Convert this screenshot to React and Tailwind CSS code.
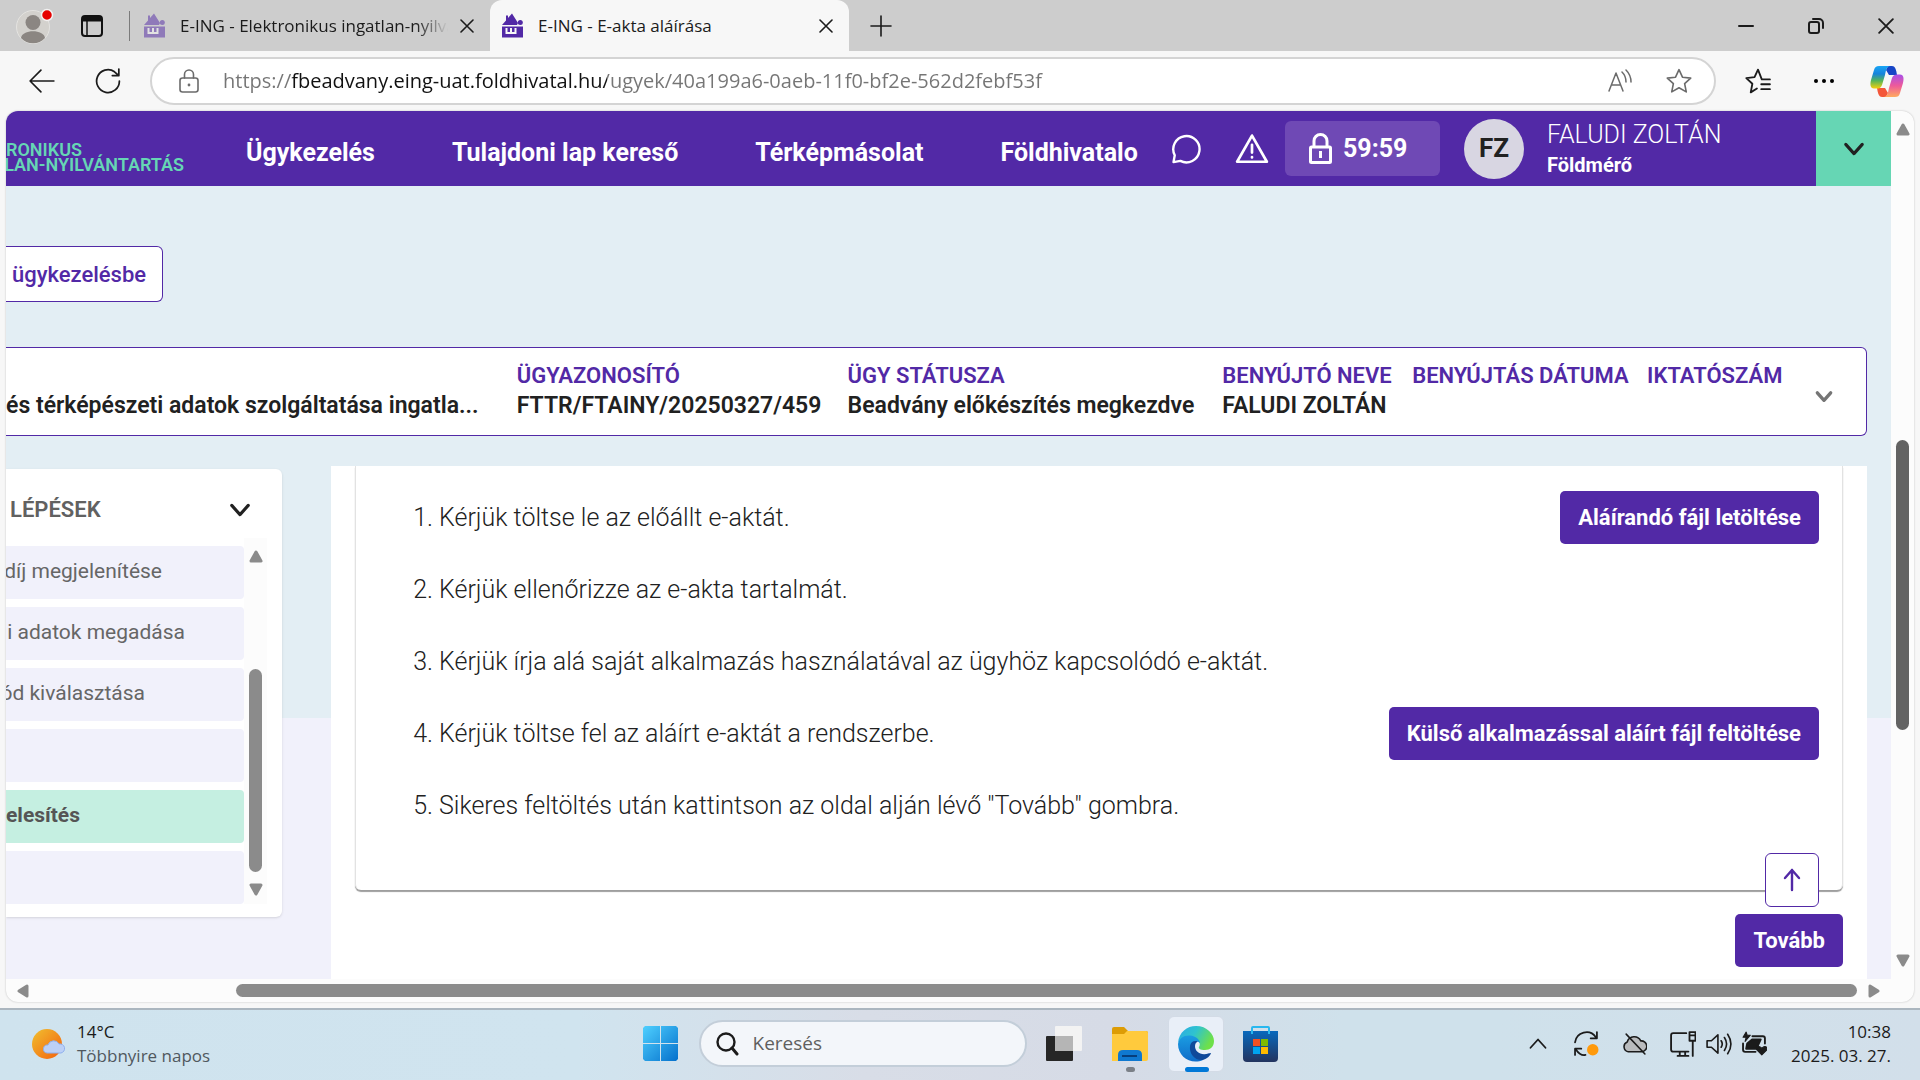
import React from 'react';

function HouseIcon({ className = '' }) {
  return (
    <svg viewBox="0 0 21 25" className={`h-[25px] w-[21px] shrink-0 ${className}`} fill="#5229a6" aria-hidden="true">
      <path d="M0 12 L4 7.500 V2.500 H6 V5 L10 0.500 L16 10 L15 12 Z" />
      <circle cx="18.300" cy="9.500" r="2.500" />
      <path d="M0 13.500 H21 V24.500 H0 Z" />
      <path d="M4.500 15 V20 H13.500 V15 M9 15 V20" fill="none" stroke="#f7f7f7" strokeWidth="2" />
    </svg>
  );
}

function Stroke({ children, size = 24, width = 2, className = '', box = 24 }) {
  return (
    <svg viewBox={`0 0 ${box} ${box}`} width={size} height={size} className={`shrink-0 ${className}`} fill="none" stroke="currentColor" strokeWidth={width} strokeLinecap="round" strokeLinejoin="round" aria-hidden="true">
      {children}
    </svg>
  );
}

function Arrow({ dir }) {
  const paths = {
    up: 'M7 2 L12 11 H2 Z',
    down: 'M2 3 H12 L7 12 Z',
    left: 'M3 7 L11 2 V12 Z',
    right: 'M11 7 L3 2 V12 Z',
  };
  return (
    <svg viewBox="0 0 14 14" width="14" height="14" fill="#8b8b8b" stroke="#8b8b8b" strokeWidth="3" strokeLinejoin="round" aria-hidden="true">
      <path d={paths[dir]} />
    </svg>
  );
}

function CloseX({ size = 14 }) {
  return (
    <Stroke size={size} box={14} width={1.6}>
      <path d="M1 1 L13 13 M13 1 L1 13" />
    </Stroke>
  );
}

function TabBar() {
  return (
    <div className="flex h-[51px] items-stretch bg-[#cdcdcd] text-[17px] text-[#1b1b1b]">
      <div className="flex w-[130px] shrink-0 items-center justify-between pl-4">
        <button aria-label="Profil">
          <svg width="38" height="38" viewBox="0 0 38 38" aria-hidden="true">
            <circle cx="17" cy="20" r="16.500" fill="#d3d1cd" stroke="#e4e3e0" />
            <circle cx="17" cy="15.500" r="7.500" fill="#8b8682" />
            <path d="M5 31 C6 22 28 22 29 31 C23 38 11 38 5 31Z" fill="#8b8682" />
            <circle cx="31" cy="8" r="5.500" fill="#e60000" stroke="#f1f1f1" strokeWidth="1.500" />
          </svg>
        </button>
        <button aria-label="Munkaterületek">
          <svg width="22" height="22" viewBox="0 0 22 22" fill="none" stroke="#111" strokeWidth="2" aria-hidden="true">
            <rect x="1" y="1" width="20" height="20" rx="3" />
            <path d="M1 4 H21" strokeWidth="5" />
            <path d="M6 5 V21" strokeWidth="1.500" />
          </svg>
        </button>
        <span className="h-[30px] w-px bg-[#7b7b7b]" />
      </div>
      <div className="flex w-[360px] shrink-0 items-center pl-[14px] pr-4">
        <HouseIcon className="opacity-50" />
        <span className="ml-[15px] min-w-0 flex-1 overflow-hidden whitespace-nowrap [mask-image:linear-gradient(to_right,black_88%,transparent)]">E-ING - Elektronikus ingatlan-nyilvántartás</span>
        <button aria-label="Lap bezárása" className="ml-3"><CloseX /></button>
      </div>
      <div className="flex w-[359px] shrink-0 items-center rounded-t-xl bg-[#f7f7f7] pl-3 pr-4">
        <HouseIcon />
        <span className="ml-[15px] flex-1 whitespace-nowrap">E-ING - E-akta aláírása</span>
        <button aria-label="Lap bezárása"><CloseX /></button>
      </div>
      <button aria-label="Új lap" className="ml-5"><Stroke size={24} width={1.6}><path d="M2 12 H22 M12 2 V22" /></Stroke></button>
      <div className="ml-auto flex items-center gap-[54px] pr-[26px]">
        <button aria-label="Kis méret"><Stroke size={16} box={16} width={2}><path d="M1 8 H15" /></Stroke></button>
        <button aria-label="Előző méret">
          <Stroke size={16} box={16} width={2}><rect x="1" y="4" width="10" height="11" rx="2" /><path d="M5 1 H11 A4 4 0 0 1 15 5 V10" /></Stroke>
        </button>
        <button aria-label="Bezárás"><CloseX size={16} /></button>
      </div>
    </div>
  );
}

function CopilotIcon() {
  return (
    <svg width="34" height="31" viewBox="0 0 34 31" aria-hidden="true">
      <defs>
        <linearGradient id="cpA" x1="0" y1="0" x2="0" y2="1"><stop offset="0" stopColor="#19a6f5" /><stop offset=".35" stopColor="#1683dc" /><stop offset=".65" stopColor="#54b45a" /><stop offset="1" stopColor="#f4d00c" /></linearGradient>
        <linearGradient id="cpB" x1="0" y1="0" x2="0" y2="1"><stop offset="0" stopColor="#a94fe8" /><stop offset=".5" stopColor="#ee5a9a" /><stop offset="1" stopColor="#ffab5e" /></linearGradient>
      </defs>
      <path d="M18 0 H22 C25 0 26 3 27 9 H19 L16 4Z" fill="#1745c6" />
      <path d="M16 31 H12 C9 31 8 28 7 22 H15 L18 27Z" fill="#f4573a" />
      <path d="M9 0 H20 C16 1 16 5 15 9 L12 19 C11 22 9 22.500 7 22.500 H4 C0 22.500 0 18 1 14 L4 4 C5 1 6 0 9 0Z" fill="url(#cpA)" />
      <path d="M25 31 H14 C18 30 18 26 19 22 L22 12 C23 9 25 8.500 27 8.500 H30 C34 8.500 34 13 33 17 L30 27 C29 30 28 31 25 31Z" fill="url(#cpB)" />
    </svg>
  );
}

const URL_TEXT = 'https://fbeadvany.eing-uat.foldhivatal.hu/ugyek/40a199a6-0aeb-11f0-bf2e-562d2febf53f';

function AddressBar() {
  return (
    <div className="flex h-[60px] items-center bg-[#f7f7f7] pl-[29px] pr-4 text-[#1b1b1b]">
      <button aria-label="Vissza"><Stroke size={26} width={1.5}><path d="M23 12 H1 M11 2 L1 12 L11 22" /></Stroke></button>
      <button aria-label="Frissítés" className="ml-10">
        <Stroke size={26} width={1.6}><path d="M22.500 12 A10.500 10.500 0 1 1 18 3.500 L22 7 M22 1 V7 H16" /></Stroke>
      </button>
      <div className="ml-[29px] flex h-12 min-w-0 flex-1 items-center rounded-full border-2 border-[#d4d4d4] bg-white pl-[25px] pr-[22px] text-[#6b6b6b]">
        <Stroke size={24} width={1.6}><rect x="3" y="9" width="18" height="14" rx="2.500" /><path d="M7.500 9 V5.500 A4.500 4.500 0 0 1 16.500 5.500 V9" /><circle cx="12" cy="16" r="0.600" fill="currentColor" /></Stroke>
        <input aria-label="Címsor" defaultValue={URL_TEXT} className="ml-[22px] min-w-0 flex-1 bg-[linear-gradient(90deg,#757575_69px,#111_69px,#111_384px,#757575_384px)] bg-clip-text text-xl text-transparent outline-none" />
        <button aria-label="Felolvasás">
          <Stroke size={24} width={1.5}><path d="M1 22 L8 4 L15 22 M3.500 16 H12.500 M14 3 Q18 7 18 13 M18 1 Q23 6 23 13" /></Stroke>
        </button>
        <button aria-label="Kedvenc hozzáadása" className="ml-[34px]">
          <Stroke size={26} width={1.5}><path d="M12 1.500 L15.200 8.500 L22.800 9.300 L17.200 14.500 L18.700 22 L12 18.200 L5.300 22 L6.800 14.500 L1.200 9.300 L8.800 8.500 Z" /></Stroke>
        </button>
      </div>
      <button aria-label="Kedvencek" className="ml-[29px]">
        <Stroke size={26} width={1.7}><path d="M23 10.500 H15.500 L12 1.500 L8.800 8.500 L1.200 9.300 L6.800 14.500 L5.300 22.500 L11 19 M15 15 H23 M15 19.500 H23" /></Stroke>
      </button>
      <button aria-label="További lehetőségek" className="ml-[42px]">
        <svg width="22" height="6" viewBox="0 0 22 6" aria-hidden="true"><circle cx="3" cy="3" r="2" /><circle cx="11" cy="3" r="2" /><circle cx="19" cy="3" r="2" /></svg>
      </button>
      <button aria-label="Copilot" className="ml-[35px]"><CopilotIcon /></button>
    </div>
  );
}

function SiteHeader() {
  return (
    <header className="flex h-[75px] items-center bg-[#5229a6] text-[25px] font-bold text-white">
      <div className="flex w-[178px] shrink-0 flex-col items-end overflow-hidden whitespace-nowrap pt-[17px] text-[18px] leading-[15px] font-semibold text-[#66d6b4]">
        <span className="w-full">RONIKUS</span>
        <span>LAN-NYILVÁNTARTÁS</span>
      </div>
      <nav className="ml-[62px] flex gap-[77px] whitespace-nowrap pt-[9px]">
        <a href="#ugykezeles">Ügykezelés</a>
        <a href="#tulajdoni-lap">Tulajdoni lap kereső</a>
        <a href="#terkepmasolat">Térképmásolat</a>
        <a href="#foldhivatal">Földhivatalo</a>
      </nav>
      <div className="ml-auto flex h-full shrink-0 items-center">
        <button aria-label="Üzenetek"><Stroke size={30} width={1.900}><path d="M2 22.500 L3 17 A10.500 10.500 0 1 1 7.500 21.500 Z" /></Stroke></button>
        <button aria-label="Figyelmeztetések" className="ml-[34px]"><Stroke size={34} width={1.900}><path d="M12 2.500 L22.500 21 H1.500 Z M12 9 V14.500 M12 17.700 V18" /></Stroke></button>
        <div className="ml-4 flex h-[55px] w-[155px] items-center rounded-md bg-[#6f49b5] pl-6">
          <svg width="23" height="31" viewBox="0 0 23 31" fill="none" stroke="white" strokeWidth="3" aria-hidden="true"><rect x="1.500" y="14" width="20" height="15.500" rx="1" /><path d="M5 14 V8 A6.500 6.500 0 0 1 18 8 V14" /><path d="M11.500 18 V25" /></svg>
          <span className="ml-[11px]">59:59</span>
        </div>
        <div className="ml-6 flex size-[60px] items-center justify-center rounded-full bg-[#d8d6e2] text-[26px] text-[#212121]">FZ</div>
        <div className="ml-[23px] w-[269px]">
          <div className="leading-8 font-light">FALUDI ZOLTÁN</div>
          <div className="text-xl leading-7">Földmérő</div>
        </div>
        <button aria-label="Felhasználói menü" className="flex h-full w-[75px] items-center justify-center bg-[#66d6b4] text-[#212121]">
          <Stroke size={22} width={3.400}><path d="M3 7 L12 17 L21 7" /></Stroke>
        </button>
      </div>
    </header>
  );
}

const CASE_FIELDS = [
  ['', 'és térképészeti adatok szolgáltatása ingatla...'],
  ['ÜGYAZONOSÍTÓ', 'FTTR/FTAINY/20250327/459'],
  ['ÜGY STÁTUSZA', 'Beadvány előkészítés megkezdve'],
  ['BENYÚJTÓ NEVE', 'FALUDI ZOLTÁN'],
  ['BENYÚJTÁS DÁTUMA', ''],
  ['IKTATÓSZÁM', ''],
];

function CaseSummary() {
  return (
    <section className="mr-6 mt-[45px] grid grid-cols-[511fr_331fr_375fr_190fr_235fr_219fr] rounded-r-md border border-l-0 border-[#5229a6] bg-white pb-[14px] pt-[13px] text-[22px] font-semibold whitespace-nowrap">
      {CASE_FIELDS.map(([label, value], i) => (
        <div key={i} className="relative leading-[30px]">
          <div className="h-[30px] text-[#5229a6]">{label}</div>
          <div className="h-[30px] text-[23px] text-[#212121]">{value}</div>
          {i === 5 && (
            <button aria-label="Részletek" className="absolute right-8 top-[26px] text-[#757575]">
              <Stroke size={20} width={4}><path d="M4 7 L12 16 L20 7" /></Stroke>
            </button>
          )}
        </div>
      ))}
    </section>
  );
}

const SIDE_ITEMS = ['díj megjelenítése', 'i adatok megadása', 'ód kiválasztása', '', 'elesítés', ''];
const SIDE_WIDTHS = ['w-[156px]', 'w-[179px]', 'w-[139px]', 'w-0', 'w-[74px]', 'w-0'];

function StepSidebar() {
  return (
    <aside className="mt-[33px] w-[276px] shrink-0 self-start rounded-r-md bg-white pb-[13px] shadow-sm">
      <div className="flex h-[69px] items-center justify-between pt-3 pl-1 pr-[31px] text-[22px] font-semibold text-[#616161]">
        <h2>LÉPÉSEK</h2>
        <button aria-label="Lépések összecsukása" className="text-[#212121]"><Stroke size={22} width={3.400}><path d="M3 7 L12 17 L21 7" /></Stroke></button>
      </div>
      <div className="flex">
        <ul className="flex flex-1 flex-col gap-2 pt-2 text-[21px]">
          {SIDE_ITEMS.map((item, i) => (
            <li key={i} className={`flex h-[53px] items-center rounded-r pb-[2px] ${item === 'elesítés' ? 'bg-[#c5efe1] font-bold text-[#555]' : 'bg-[#f1f1fb] text-[#666]'}`}>
              <span className={`flex justify-end overflow-hidden whitespace-nowrap ${SIDE_WIDTHS[i]}`}>{item}</span>
            </li>
          ))}
        </ul>
        <div className="mr-[15px] flex w-[23px] flex-col items-center bg-[#fcfcfc] pb-1 pt-3">
          <button aria-label="Fel"><Arrow dir="up" /></button>
          <div className="mt-auto mb-[10px] h-[203px] w-[13px] rounded-full bg-[#8b8b8b]" />
          <button aria-label="Le" className="pb-1"><Arrow dir="down" /></button>
        </div>
      </div>
    </aside>
  );
}

const STEPS = [
  ['Kérjük töltse le az előállt e-aktát.', 'Aláírandó fájl letöltése'],
  ['Kérjük ellenőrizze az e-akta tartalmát.'],
  ['Kérjük írja alá saját alkalmazás használatával az ügyhöz kapcsolódó e-aktát.'],
  ['Kérjük töltse fel az aláírt e-aktát a rendszerbe.', 'Külső alkalmazással aláírt fájl feltöltése'],
  ['Sikeres feltöltés után kattintson az oldal alján lévő "Tovább" gombra.'],
];

function PrimaryButton({ children }) {
  return <button className="h-[53px] rounded-[5px] bg-[#5229a6] px-[18px] text-[22px] font-bold whitespace-nowrap text-white">{children}</button>;
}

function SigningPanel() {
  return (
    <main className="mt-[30px] ml-[49px] mr-6 min-w-0 flex-1 bg-white px-6 pb-3">
      <section className="relative rounded-b-md border-x border-[#e2e2e2] pb-[49px] pl-[53px] pr-[23px] pt-[15px] shadow-[0_2px_1px_#9e9e9e]">
        <ol>
          {STEPS.map(([text, action], i) => (
            <li key={text} className="flex h-[72px] items-center text-[25px] font-light text-[#212121]">
              <span className="mr-[6px] w-6 pt-[2px] text-right whitespace-nowrap">{i + 1}.</span>
              <span className="flex-1 pt-[2px] whitespace-nowrap">{text}</span>
              {action && <PrimaryButton>{action}</PrimaryButton>}
            </li>
          ))}
        </ol>
        <button aria-label="Vissza az oldal tetejére" className="absolute right-[23px] -bottom-[17px] flex size-[54px] items-center justify-center rounded-md border border-[#5229a6] bg-white text-[#5229a6]">
          <Stroke size={24} width={2.400}><path d="M12 22 V2 M5 10 L12 2 L19 10" /></Stroke>
        </button>
      </section>
      <div className="mt-6 flex justify-end"><PrimaryButton>Tovább</PrimaryButton></div>
    </main>
  );
}

function BrowserPage() {
  return (
    <div className="flex flex-1 flex-col bg-[#f7f7f7] pb-[6px] pl-[6px] pr-[6px]">
      <div className="flex flex-1 flex-col overflow-hidden rounded-xl bg-[#fcfcfc] shadow-[0_0_2px_#bbb]">
        <div className="flex flex-1">
          <div className="relative flex min-w-0 flex-1 flex-col bg-[linear-gradient(#e3eef4_607px,#f1f1fb_607px)] [font-family:Roboto,sans-serif]">
            <SiteHeader />
            <div className="mt-[60px]">
              <button className="h-14 w-[157px] rounded-r-md border border-l-0 border-[#5229a6] bg-white text-left pl-[6px] text-[22px] font-medium whitespace-nowrap text-[#5229a6]">ügykezelésbe</button>
            </div>
            <CaseSummary />
            <div className="flex flex-1">
              <StepSidebar />
              <SigningPanel />
            </div>
          </div>
          <div className="flex w-[23px] flex-col items-center py-3">
            <button aria-label="Görgetés fel"><Arrow dir="up" /></button>
            <div className="mt-[303px] h-[290px] w-[13px] rounded-full bg-[#636363]" />
            <button aria-label="Görgetés le" className="mt-auto"><Arrow dir="down" /></button>
          </div>
        </div>
        <div className="flex h-[23px] items-center pl-[10px] pr-[33px]">
          <button aria-label="Görgetés balra"><Arrow dir="left" /></button>
          <div className="ml-[206px] mr-[10px] h-[13px] flex-1 rounded-full bg-[#8b8b8b]" />
          <button aria-label="Görgetés jobbra"><Arrow dir="right" /></button>
        </div>
      </div>
    </div>
  );
}

function EdgeIcon() {
  return (
    <svg width="36" height="36" viewBox="0 0 36 36" aria-hidden="true">
      <defs>
        <linearGradient id="edA" x1="0" y1="0" x2="1" y2=".4"><stop offset="0" stopColor="#2aa9e6" /><stop offset=".5" stopColor="#2fc3cf" /><stop offset="1" stopColor="#6ee04a" /></linearGradient>
        <linearGradient id="edB" x1="0" y1="0" x2="0" y2="1"><stop offset="0" stopColor="#1b9de2" /><stop offset="1" stopColor="#0f6cc9" /></linearGradient>
      </defs>
      <path d="M0 17 C1 6 9 0 18 0 C29 0 36 8 36 15 C36 21 32 24 27 24 C22 24 20 22.500 21 21 C23 18 21 13 15 12 C8 10 2 13 0 17Z" fill="url(#edA)" />
      <path d="M0 18 C1 12 6 9 12 9.500 C18 10 22 14 22 17 C19 13.500 14 16 14 22 C14 29 20 33 25 34 C13 39 0 31 0 18Z" fill="url(#edB)" />
      <path d="M12 20 C11 28 17 35 25 34 C29 32.500 32 30 33 27.500 C33 26.500 32 27 31 27.300 C23 30 17 26 17 20 C17 17 19 16 20 15.500 C16 14 12.500 16 12 20Z" fill="#10499a" />
    </svg>
  );
}

function Taskbar() {
  return (
    <footer className="grid h-[72px] grid-cols-[1fr_auto_1fr] items-center border-t-2 border-[#abb6bf] bg-[linear-gradient(90deg,#cfe3ee_0%,#d0e4ef_30%,#d8dde7_45%,#d6dbe6_58%,#cfe1eb_70%,#cfe1eb_78%,#d2dfea_100%)] pb-[3px] text-[17px] text-[#1b1b1b]">
      <button className="flex items-center gap-3 pl-8 text-left leading-6">
        <svg width="33" height="30" viewBox="0 0 33 30" aria-hidden="true">
          <defs><linearGradient id="sun" x1="0" y1="0" x2="1" y2="1"><stop offset="0" stopColor="#f0c030" /><stop offset="1" stopColor="#f4600c" /></linearGradient></defs>
          <circle cx="15" cy="15" r="15" fill="url(#sun)" />
          <path d="M15 24 A4 4 0 0 1 16 16 A6 6 0 0 1 27 15 A4.500 4.500 0 0 1 29 24Z" fill="#bcd0f6" stroke="#8fb0ee" />
        </svg>
        <span>
          <span className="block">14°C</span>
          <span className="block text-[#50585e]">Többnyire napos</span>
        </span>
      </button>
      <div className="flex h-full items-center">
        <button aria-label="Start">
          <svg width="35" height="35" viewBox="0 0 35 35" aria-hidden="true">
            <defs><linearGradient id="win" x1="0" y1="0" x2="1" y2="1"><stop offset="0" stopColor="#4fd0ff" /><stop offset="1" stopColor="#0470cc" /></linearGradient></defs>
            <path d="M2 0 H17 V17 H0 V2Z M18 0 H33 L35 2 V17 H18Z M0 18 H17 V35 H2 L0 33Z M18 18 H35 V33 L33 35 H18Z" fill="url(#win)" />
          </svg>
        </button>
        <label className="ml-[21px] flex h-[47px] w-[328px] items-center gap-[14px] rounded-full border-2 border-[#c3ced9] bg-[#f3f6fa] pl-[14px]">
          <Stroke size={24} width={2.400}><circle cx="11" cy="10" r="8.500" /><path d="M17 16 L22 22" strokeWidth="3" /></Stroke>
          <input type="search" aria-label="Keresés" placeholder="Keresés" className="w-full bg-transparent text-[19px] outline-none placeholder:text-[#5f5f5f]" />
        </label>
        <button aria-label="Feladatnézet" className="ml-[19px]">
          <svg width="36" height="35" viewBox="0 0 36 35" aria-hidden="true"><rect x="0" y="10" width="27" height="25" rx="1" fill="#262626" /><rect x="9" y="0" width="27" height="25" rx="1" fill="#f3f3f3" /><rect x="9" y="10" width="18" height="15" fill="#b5b5b5" /></svg>
        </button>
        <button aria-label="Fájlkezelő" className="relative ml-[30px]">
          <svg width="36" height="34" viewBox="0 0 36 34" aria-hidden="true">
            <path d="M0 2 Q0 0 2 0 H12 L16 4 H34 Q36 4 36 6 V10 H0Z" fill="#dd9c05" /><path d="M0 7 H12 L15 4 H34 Q36 4 36 6 V32 Q36 34 34 34 H0Z" fill="#ffca3d" />
            <path d="M6 34 V28 Q6 23 11 23 H25 Q30 23 30 28 V34Z" fill="#0f78d0" /><path d="M10 29 H25" stroke="#063e7c" strokeWidth="2" />
          </svg>
          <span className="absolute -bottom-[11px] left-[14px] h-[5px] w-[9px] rounded-full bg-[#7b8087]" />
        </button>
        <button aria-label="Microsoft Edge" className="relative ml-5 flex size-14 items-center justify-center rounded-md border border-[#d3dbe6] bg-[#e9eff8]">
          <EdgeIcon />
          <span className="absolute -bottom-px left-4 h-[5px] w-6 rounded-full bg-[#0078d7]" />
        </button>
        <button aria-label="Microsoft Store" className="ml-[19px]">
          <svg width="35" height="36" viewBox="0 0 35 36" aria-hidden="true">
            <defs><linearGradient id="store" x1="0" y1="0" x2="0" y2="1"><stop offset="0" stopColor="#0869bd" /><stop offset="1" stopColor="#23345f" /></linearGradient></defs>
            <path d="M0 5 H35 V32 Q35 36 31 36 H4 Q0 36 0 32Z" fill="url(#store)" /><path d="M9 8 V2 Q9 1 10 1 H25 Q26 1 26 2 V8" fill="none" stroke="#28b8ef" strokeWidth="2" />
            <path d="M10 13 H17 V20 H10Z" fill="#f25022" /><path d="M18 13 H25 V20 H18Z" fill="#7fba00" /><path d="M10 21 H17 V28 H10Z" fill="#00a4ef" /><path d="M18 21 H25 V28 H18Z" fill="#ffb900" />
          </svg>
        </button>
      </div>
      <div className="flex items-center justify-end pr-[29px]">
        <button aria-label="Rejtett ikonok"><Stroke size={18} width={2.400}><path d="M2 17 L12 6 L22 17" /></Stroke></button>
        <button aria-label="Frissítés" className="ml-[27px]">
          <Stroke size={25} width={1.700}><path d="M1 11 A11 11 0 0 1 21 6 M22 1 V7 H16 M1 23 V17 H7 M2 18 Q6 24 11 23" /><circle cx="18" cy="18" r="5.500" fill="#ff9a0c" stroke="none" /></Stroke>
        </button>
        <button aria-label="OneDrive" className="ml-[23px]">
          <Stroke size={25} width={1.500}><path d="M6 20 A5 5 0 0 1 5 10.500 A7 7 0 0 1 18 9.500 A5 5 0 0 1 19 20Z" fill="#b9bbbd" /><path d="M4 3 L22 22" /></Stroke>
        </button>
        <button aria-label="Hálózat" className="ml-[23px]">
          <Stroke size={26} width={1.700}><path d="M15 2 H3 Q1 2 1 4 V17 Q1 19 3 19 H17 M7 23 H17 M9 19 V23 M14 19 V23 M19 1 H23.500 V9 H18 V1 Z M21 9 V23 M18 4 H23" /></Stroke>
        </button>
        <button aria-label="Hangerő" className="ml-[10px]">
          <Stroke size={26} width={1.500}><path d="M1 9 H5 L11 3.500 V20.500 L5 15 H1 Z M14 9 Q16 12 14 15 M17 6 Q21 12 17 18 M20 3 Q26 12 20 21" /></Stroke>
        </button>
        <button aria-label="Akkumulátor" className="ml-[10px]">
          <Stroke size={25} width={1.800}><path d="M10 5 H20 Q22 5 22 7 V12 M1 12 V18 Q1 20 3 20 H13" /><path d="M10 8 H18 L14 17 H4 L5 12Z" fill="currentColor" /><path d="M4 1 L1 6 H4 L3 10 L8 4 H5Z M19 23 L14 18 Q14 14 17 15 L19 16.500 L21 15 Q24 14 24 18Z" fill="currentColor" strokeWidth="1" /></Stroke>
        </button>
        <div className="ml-6 text-right leading-6 whitespace-nowrap">
          <div>10:38</div>
          <div>2025. 03. 27.</div>
        </div>
      </div>
    </footer>
  );
}

export default function App() {
  return (
    <div className="flex min-h-screen flex-col overflow-hidden [font-family:'Open_Sans',sans-serif]">
      <TabBar />
      <AddressBar />
      <BrowserPage />
      <Taskbar />
    </div>
  );
}
